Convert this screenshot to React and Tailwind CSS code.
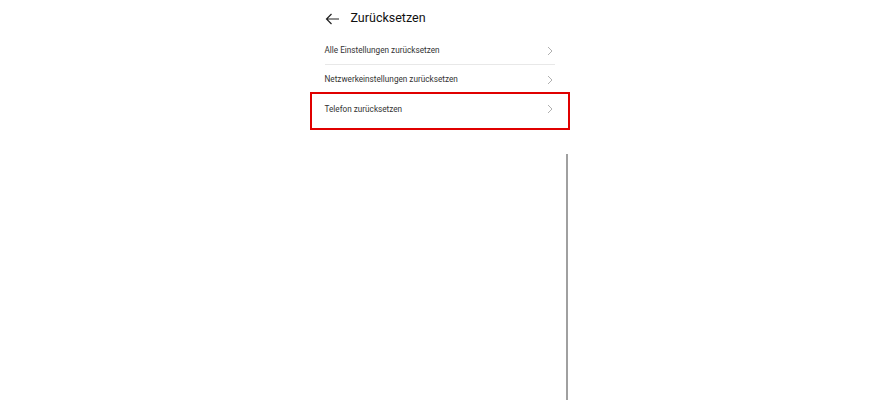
const Chevron = () => (
  <svg width="6" height="10" viewBox="0 0 6 10" fill="none" className="shrink-0">
    <path d="M1 1l4 4-4 4" stroke="#b0b0b0" strokeWidth="1" />
  </svg>
);

const Row = ({ label, className }) => (
  <div className={"flex items-center justify-between pt-[2px] " + className}>
    <span className="text-[8.2px] text-[#333]">{label}</span>
    <Chevron />
  </div>
);

export default function App() {
  return (
    <div className="w-full h-[400px] bg-white overflow-hidden font-['Roboto','Liberation_Sans',sans-serif]">
      <div className="mx-auto w-[260px] h-full flex flex-col">
        <div className="h-[35px] pt-[2px] px-[15px] flex items-center gap-[11px]">
          <svg width="15" height="12" viewBox="0 0 15 12" fill="none">
            <path d="M14 6H1.5M6.5 1L1.5 6l5 5" stroke="#222" strokeWidth="1.2" />
          </svg>
          <h1 className="text-[12.5px] font-normal text-[#111]">Zurücksetzen</h1>
        </div>
        <div className="mx-[15px]">
          <Row label="Alle Einstellungen zurücksetzen" className="h-[30px] border-b border-[#e8e8e8] pr-[2px]" />
          <Row label="Netzwerkeinstellungen zurücksetzen" className="h-[27px] pr-[2px]" />
        </div>
        <div className="h-[38px] border-2 border-[#e00000] px-[13px] pr-[15px] pb-[4px] flex items-center justify-between">
          <span className="text-[8.2px] text-[#333]">Telefon zurücksetzen</span>
          <Chevron />
        </div>
        <div className="self-end mr-[2px] mt-[24px] w-[2px] flex-1 bg-[#a0a0a0]" />
      </div>
    </div>
  );
}
